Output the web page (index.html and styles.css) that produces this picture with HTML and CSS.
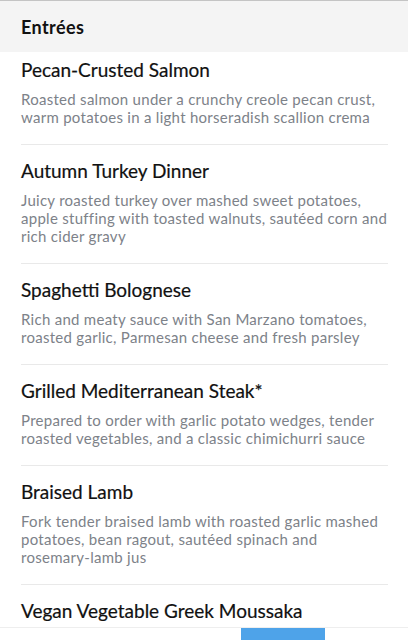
FILE: index.html
```html
<!DOCTYPE html>
<html lang="en">
<head>
    <meta charset="UTF-8">
    <meta name="viewport" content="width=device-width, initial-scale=1.0">
    <title>Entrées</title>
    <link rel="stylesheet" href="styles.css">
</head>
<body>
    <div id="menu-app">
        <header class="section-header">
            <h1>Entrées</h1>
        </header>
        <ul class="menu-list">
            <li class="menu-item">
                <h2>Pecan-Crusted Salmon</h2>
                <p>Roasted salmon under a crunchy creole pecan crust, warm potatoes in a light horseradish scallion crema</p>
            </li>
            <li class="menu-item">
                <h2>Autumn Turkey Dinner</h2>
                <p>Juicy roasted turkey over mashed sweet potatoes, apple stuffing with toasted walnuts, sautéed corn and rich cider gravy</p>
            </li>
            <li class="menu-item">
                <h2>Spaghetti Bolognese</h2>
                <p>Rich and meaty sauce with San Marzano tomatoes, roasted garlic, Parmesan cheese and fresh parsley</p>
            </li>
            <li class="menu-item">
                <h2>Grilled Mediterranean Steak*</h2>
                <p>Prepared to order with garlic potato wedges, tender roasted vegetables, and a classic chimichurri sauce</p>
            </li>
            <li class="menu-item">
                <h2>Braised Lamb</h2>
                <p>Fork tender braised lamb with roasted garlic mashed potatoes, bean ragout, sautéed spinach and rosemary-lamb jus</p>
            </li>
            <li class="menu-item">
                <h2>Vegan Vegetable Greek Moussaka</h2>
            </li>
        </ul>
        <div class="bottom-bar">
            <div class="bottom-tab"></div>
        </div>
    </div>
</body>
</html>
```

FILE: styles.css
```css
body {
    margin: 0;
    font-family: Lato, "Open Sans", sans-serif;
    background-color: white;
    overflow: hidden;
}

#menu-app {
    height: 640px;
    border-top: 1px solid #c4c4c4;
    box-sizing: border-box;
}

.section-header {
    background-color: #f4f4f4;
    height: 51px;
    padding: 0 21px;
    display: flex;
    align-items: center;
}

.section-header h1 {
    margin: 0;
    font-size: 18px;
    letter-spacing: 0.4px;
    font-weight: bold;
    color: #111;
}

.menu-list {
    list-style: none;
    margin: 0;
    padding: 0 20px 0 21px;
}

.menu-item {
    padding: 15px 0 18px;
    border-bottom: 1px solid #e9e9e9;
}

.menu-item:first-child {
    padding-top: 7px;
}

.menu-item h2 {
    margin: 0 0 9px;
    font-size: 19px;
    line-height: 22px;
    font-weight: normal;
    color: #111;
    -webkit-text-stroke: 0.2px #111;
}

.menu-item p {
    margin: 0;
    font-size: 15px;
    letter-spacing: 0.28px;
    line-height: 18px;
    color: #7d8289;
}

.bottom-bar {
    position: fixed;
    left: 0;
    right: 0;
    bottom: 0;
    height: 12px;
    background-color: white;
    border-top: 1px solid #eeeeee;
}

.bottom-tab {
    margin-left: 241px;
    width: 84px;
    height: 12px;
    background-color: #4ea3e9;
}
```
